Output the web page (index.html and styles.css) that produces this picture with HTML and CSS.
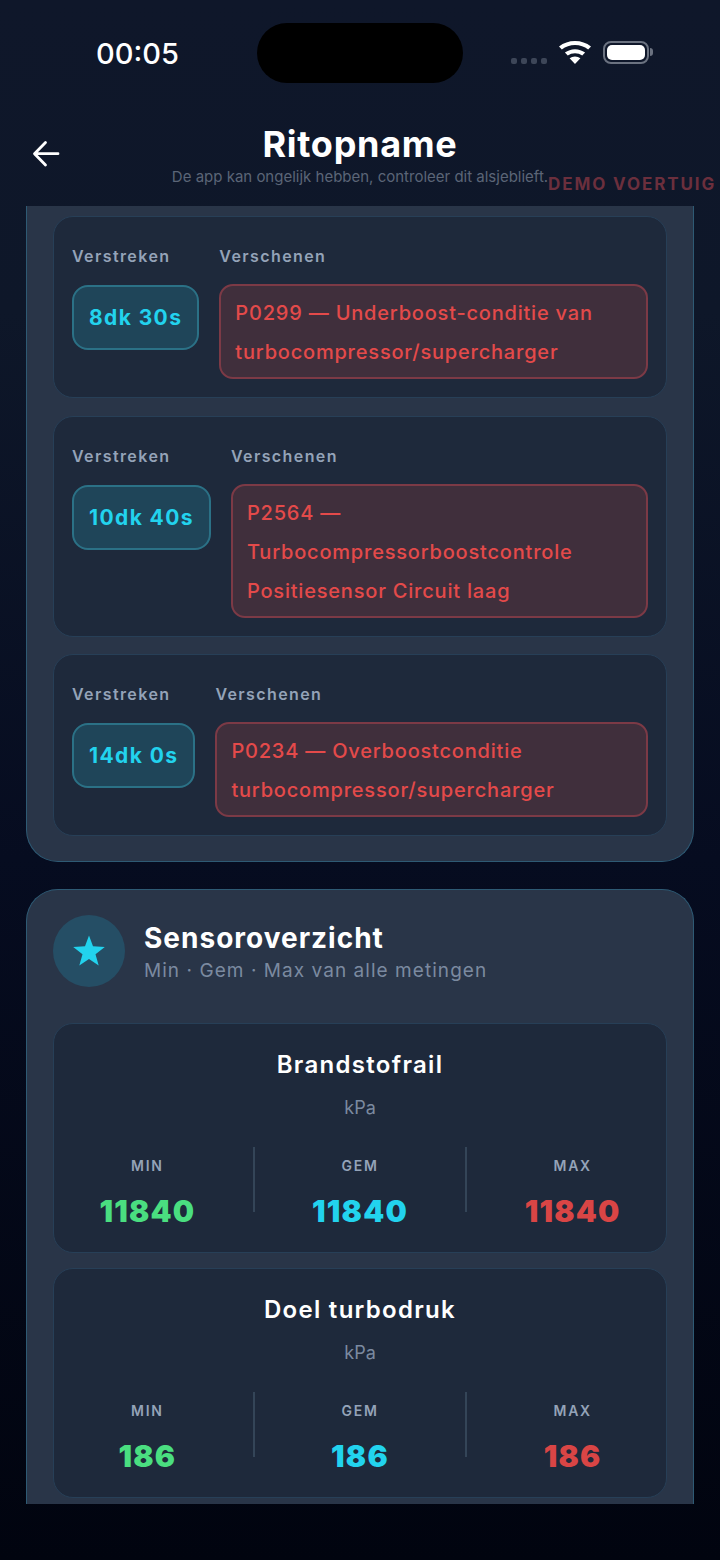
FILE: index.html
```html
<!DOCTYPE html>
<html lang="nl">
<head>
<meta charset="utf-8">
<title>Ritopname</title>
<link rel="stylesheet" href="styles.css">
</head>
<body>
<div class="screen">
  <header class="top">
    <div class="status">
      <span class="time">00:05</span>
      <span class="island"></span>
      <div class="status-icons">
        <span class="dots"><i></i><i></i><i></i><i></i></span>
        <svg class="wifi" width="32" height="23" viewBox="3 1.500 26 20" preserveAspectRatio="none"><path d="M16 21.500 11.600 16.600a6.600 6.600 0 0 1 8.800 0Z M16 8.600a13 13 0 0 1 8.200 3l-2.300 2.600a9.400 9.400 0 0 0-11.800 0L7.800 11.600a13 13 0 0 1 8.200-3Z M16 1.500a20 20 0 0 1 13 4.800l-2.300 2.600a16.400 16.400 0 0 0-21.400 0L3 6.300a20 20 0 0 1 13-4.800Z" fill="#fff"/></svg>
        <span class="battery"><i></i></span>
      </div>
    </div>
    <div class="nav">
      <svg class="back" width="30" height="30" viewBox="0 0 30 30"><path d="M27 14.700H4M14.500 3.500 3.500 14.700 14.500 26" fill="none" stroke="#fff" stroke-width="2.800" stroke-linecap="round" stroke-linejoin="round"/></svg>
      <h1>Ritopname</h1>
      <p class="note">De app kan ongelijk hebben, controleer dit alsjeblieft.</p>
      <span class="demo">DEMO VOERTUIG</span>
    </div>
  </header>
  <main class="scroll">
    <section class="card card-clipped">
      <article class="event">
        <div class="col"><span class="label">Verstreken</span><span class="time-badge">8dk 30s</span></div>
        <div class="col col-fill"><span class="label">Verschenen</span><span class="code">P0299 — Underboost-conditie van turbocompressor/supercharger</span></div>
      </article>
      <article class="event">
        <div class="col"><span class="label">Verstreken</span><span class="time-badge">10dk 40s</span></div>
        <div class="col col-fill"><span class="label">Verschenen</span><span class="code">P2564 — Turbocompressorboostcontrole Positiesensor Circuit laag</span></div>
      </article>
      <article class="event">
        <div class="col"><span class="label">Verstreken</span><span class="time-badge">14dk 0s</span></div>
        <div class="col col-fill"><span class="label">Verschenen</span><span class="code">P0234 — Overboostconditie turbocompressor/supercharger</span></div>
      </article>
    </section>
    <section class="card card-sensors">
      <div class="card-head">
        <span class="icon-circle"><svg width="34" height="34" viewBox="0 0 34 34"><path d="M17 1.500 21 12.300 32.800 12.900 23.500 20.200 26.700 31.500 17 25 7.300 31.500 10.500 20.200 1.200 12.900 13 12.300Z" fill="#22d3ee"/></svg></span>
        <div class="head-text">
          <h2>Sensoroverzicht</h2>
          <p>Min · Gem · Max van alle metingen</p>
        </div>
      </div>
      <article class="sensor">
        <h3>Brandstofrail</h3>
        <p class="unit">kPa</p>
        <div class="stats">
          <div class="stat"><span class="stat-label">MIN</span><span class="val green">11840</span></div>
          <div class="stat"><span class="stat-label">GEM</span><span class="val cyan">11840</span></div>
          <div class="stat"><span class="stat-label">MAX</span><span class="val red">11840</span></div>
        </div>
      </article>
      <article class="sensor">
        <h3>Doel turbodruk</h3>
        <p class="unit">kPa</p>
        <div class="stats">
          <div class="stat"><span class="stat-label">MIN</span><span class="val green">186</span></div>
          <div class="stat"><span class="stat-label">GEM</span><span class="val cyan">186</span></div>
          <div class="stat"><span class="stat-label">MAX</span><span class="val red">186</span></div>
        </div>
      </article>
    </section>
  </main>
</div>
</body>
</html>
```
FILE: styles.css
```css
* { box-sizing: border-box; }
html, body { margin: 0; padding: 0; }
body { width: 720px; height: 1560px; overflow: hidden; background: #020617; font-family: Inter, "Liberation Sans", sans-serif; color: #fff; }
h1, h2, h3, p { margin: 0; }
.screen { width: 720px; height: 1560px; background: linear-gradient(180deg, #0f172a 0%, #0e1729 20%, #060c20 55%, #01040f 100%); overflow: hidden; }
.top { height: 206px; }
.status { position: relative; height: 106px; }
.time { position: absolute; left: 96px; top: 36px; font-size: 29px; line-height: 35px; font-weight: 500; font-family: Inter, sans-serif; }
.island { position: absolute; left: 257px; top: 23px; width: 206px; height: 60px; border-radius: 30px; background: #000; }
.status-icons { position: absolute; left: 511px; top: 41px; display: flex; align-items: flex-start; }
.dots { display: flex; gap: 4px; margin-top: 17px; }
.dots i { width: 6px; height: 6px; border-radius: 2px; background: #3d4658; }
.wifi { margin-left: 12px; }
.battery { position: relative; margin-left: 12px; width: 46px; height: 23px; border: 2px solid #6b7280; border-radius: 8px; padding: 2px; display: block; }
.battery i { display: block; height: 100%; border-radius: 5px; background: #fff; }
.battery::after { content: ""; position: absolute; right: -6px; top: 5px; width: 3px; height: 8px; border-radius: 0 3px 3px 0; background: #6b7280; }
.nav { position: relative; text-align: center; padding-top: 17px; }
.back { position: absolute; left: 31px; top: 33px; }
h1 { font-size: 36px; line-height: 42px; font-weight: 700; letter-spacing: 0.700px; color: #fff; }
.note { font-size: 15px; line-height: 18px; color: #5b6577; margin-top: 3px; }
.demo { position: absolute; left: 548px; top: 67px; font-size: 17px; line-height: 22px; font-weight: 700; letter-spacing: 1.900px; color: #6b2f3d; white-space: nowrap; }
.scroll { margin: 0 26px; height: 1298px; overflow: hidden; }
.card { width: 668px; background: #293548; border: 1px solid #2e5a74; padding: 0 26px; }
.card-clipped { border-top: 0; height: 656px; border-radius: 0 0 32px 32px; padding-top: 10px; padding-bottom: 26px; display: flex; flex-direction: column; gap: 17.500px; }
.card-sensors { margin-top: 27px; border-radius: 32px 32px 0 0; border-bottom: 0; padding-top: 25px; height: 615px; }
.event { display: flex; gap: 20px; padding: 29px 18px 18px; background: #1e293b; border: 1px solid #273f57; border-radius: 20px; }
.col { display: flex; flex-direction: column; align-items: flex-start; }
.col-fill { flex: 1; min-width: 0; }
.label { font-size: 16px; line-height: 20px; font-weight: 600; letter-spacing: 1.400px; color: #94a3b8; }
.time-badge { margin-top: 19px; padding: 0 15px; height: 65px; display: flex; align-items: center; font-size: 21px; font-weight: 650; letter-spacing: 1.400px; color: #22d3ee; background: #1f4559; border: 2px solid #2b7186; border-radius: 16px; white-space: nowrap; }
.code { margin-top: 18px; width: 100%; padding: 8px 14px 5px; font-size: 20px; line-height: 39px; font-weight: 550; letter-spacing: 0.800px; color: #e44a4a; background: #402f3c; border: 2px solid #7c3a46; border-radius: 14px; }
.card-head { display: flex; align-items: center; gap: 20px; }
.icon-circle { width: 72px; height: 72px; flex: none; margin-left: -0.500px; border-radius: 50%; background: #254e65; display: flex; align-items: center; justify-content: center; }
.head-text { margin-left: -0.500px; }
h2 { font-size: 28px; line-height: 34px; font-weight: 700; letter-spacing: 1px; color: #fff; margin-top: 1px; }
.head-text p { margin-top: 4px; font-size: 19px; line-height: 23px; letter-spacing: 1.050px; color: #7b8aa0; }
.sensor { height: 230px; margin-top: 15px; padding-top: 25px; text-align: center; background: #1e293b; border: 1px solid #273f57; border-radius: 20px; }
.card-head + .sensor { margin-top: 36px; }
h3 { font-size: 24px; line-height: 32px; font-weight: 600; letter-spacing: 1.300px; color: #fff; }
.unit { margin-top: 16px; font-size: 18px; line-height: 22px; color: #7b8aa0; }
.stats { display: flex; margin: 28px -12px 0; }
.stat { flex: 1; height: 65px; display: flex; flex-direction: column; align-items: center; border-right: 2px solid #344558; }
.stat:last-child { border-right: 0; }
.stat-label { margin-top: 10px; font-size: 14px; line-height: 18px; font-weight: 600; letter-spacing: 1.700px; color: #94a3b8; }
.val { margin-top: 18px; font-size: 30px; line-height: 36px; font-weight: 900; letter-spacing: 1.200px; }
.green { color: #4ade80; }
.cyan { color: #22d3ee; }
.red { color: #d94545; }
```
